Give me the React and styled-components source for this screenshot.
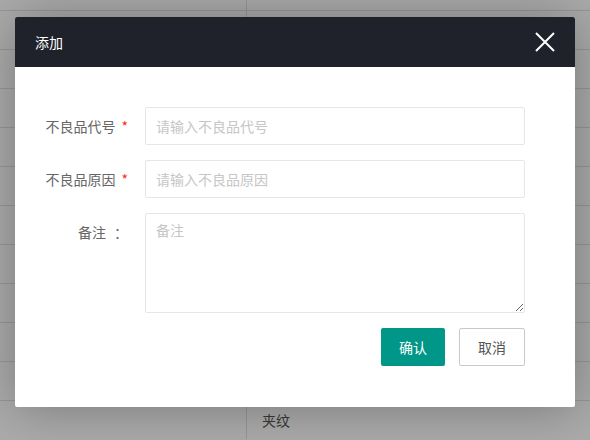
import styled, { createGlobalStyle } from "styled-components";

const GlobalStyle = createGlobalStyle`
    html, body {
        margin: 0;
        padding: 0;
        background: #fff;
    }
    body {
        font-family: "Noto Sans CJK SC", "Liberation Sans", sans-serif;
        font-size: 14px;
        color: #666;
    }
    * {
        box-sizing: border-box;
    }
`;

const Page = styled.div`
    position: relative;
    width: 590px;
    height: 440px;
    overflow: hidden;
`;

// the list page lying under the dialog
const Table = styled.div`
    display: flex;
    flex-direction: column;
`;

const Row = styled.div`
    display: grid;
    grid-template-columns: 247px 1fr;
    height: ${props => props.$height}px;
    border-top: ${props => props.$first ? 'none' : '1px solid #e2e2e2'};
`;

const Cell = styled.div`
    display: flex;
    align-items: center;
    padding-left: 15px;
    border-right: ${props => props.$divider ? '1px solid #e2e2e2' : 'none'};
    color: #555;
`;

const Shade = styled.div`
    position: absolute;
    inset: 0;
    background: rgba(0, 0, 0, 0.33);
`;

const Dialog = styled.div`
    position: absolute;
    left: 15px;
    top: 17px;
    width: 560px;
    height: 390px;
    background: #fff;
    border-radius: 2px;
    box-shadow: 1px 1px 50px rgba(0, 0, 0, 0.3);
    display: flex;
    flex-direction: column;
`;

const Header = styled.div`
    height: 50px;
    flex-shrink: 0;
    display: flex;
    align-items: center;
    justify-content: space-between;
    padding: 0 20px;
    background: #1f222a;
    border-radius: 2px 2px 0 0;
`;

const Title = styled.span`
    color: #fff;
    font-size: 14px;
`;

const CloseButton = styled.button`
    width: 20px;
    height: 20px;
    padding: 0;
    border: none;
    background: none;
    cursor: pointer;
    display: block;
`;

const Form = styled.form`
    display: flex;
    flex-direction: column;
    gap: 15px;
    padding: 40px 50px 0 0;
`;

const FormRow = styled.div`
    display: grid;
    grid-template-columns: 120px 1fr;
    column-gap: 10px;
`;

const Label = styled.label`
    display: block;
    text-align: right;
    padding-right: 7px;
    line-height: 38px;
    font-size: 14px;
    color: #666;
    white-space: pre;
`;

const Required = styled.span`
    color: #ff2a1a;
    margin-left: 6px;
`;

const Colon = styled.span`
    margin-left: 8px;
`;

const Input = styled.input`
    height: 38px;
    width: 100%;
    border: 1px solid #e6e6e6;
    border-radius: 2px;
    padding: 0 10px;
    font-family: inherit;
    font-size: 14px;
    color: #333;
    outline: none;
    &::placeholder {
        color: #c6c6c6;
    }
`;

const TextArea = styled.textarea`
    display: block;
    height: 100px;
    width: 100%;
    border: 1px solid #e6e6e6;
    border-radius: 2px;
    padding: 6px 10px;
    line-height: 20px;
    font-family: inherit;
    font-size: 14px;
    color: #333;
    outline: none;
    resize: vertical;
    &::placeholder {
        color: #c6c6c6;
    }
`;

const Actions = styled.div`
    display: flex;
    justify-content: flex-end;
    gap: 14px;
`;

const Button = styled.button`
    height: 38px;
    padding: 0 18px;
    border-radius: 2px;
    font-family: inherit;
    font-size: 14px;
    white-space: nowrap;
    cursor: pointer;
    border: ${props => props.$primary ? 'none' : '1px solid #c9c9c9'};
    background: ${props => props.$primary ? '#009688' : '#fff'};
    color: ${props => props.$primary ? '#fff' : '#555'};
`;

const rows = [
    { height: 10, name: '' },
    ...Array.from({ length: 10 }, () => ({ height: 39, name: '' })),
    { height: 39, name: '夹纹' },
];

const CloseIcon = () => (
    <svg width="20" height="20" viewBox="0 0 20 20">
        <path d="M1 1 L19 19 M19 1 L1 19" stroke="#fff" strokeWidth="2" fill="none" />
    </svg>
);

const App = () => {
    return (
        <Page>
            <GlobalStyle />
            <Table>
                {rows.map((row, index) => (
                    <Row key={index} $height={row.height} $first={index === 0}>
                        <Cell $divider />
                        <Cell>{row.name}</Cell>
                    </Row>
                ))}
            </Table>
            <Shade />
            <Dialog>
                <Header>
                    <Title>添加</Title>
                    <CloseButton type="button" aria-label="close">
                        <CloseIcon />
                    </CloseButton>
                </Header>
                <Form onSubmit={e => e.preventDefault()}>
                    <FormRow>
                        <Label>不良品代号<Required>*</Required></Label>
                        <Input placeholder="请输入不良品代号" />
                    </FormRow>
                    <FormRow>
                        <Label>不良品原因<Required>*</Required></Label>
                        <Input placeholder="请输入不良品原因" />
                    </FormRow>
                    <FormRow>
                        <Label>备注<Colon>：</Colon></Label>
                        <TextArea placeholder="备注" />
                    </FormRow>
                    <FormRow>
                        <span />
                        <Actions>
                            <Button type="submit" $primary>确认</Button>
                            <Button type="button">取消</Button>
                        </Actions>
                    </FormRow>
                </Form>
            </Dialog>
        </Page>
    );
};

export default App;
